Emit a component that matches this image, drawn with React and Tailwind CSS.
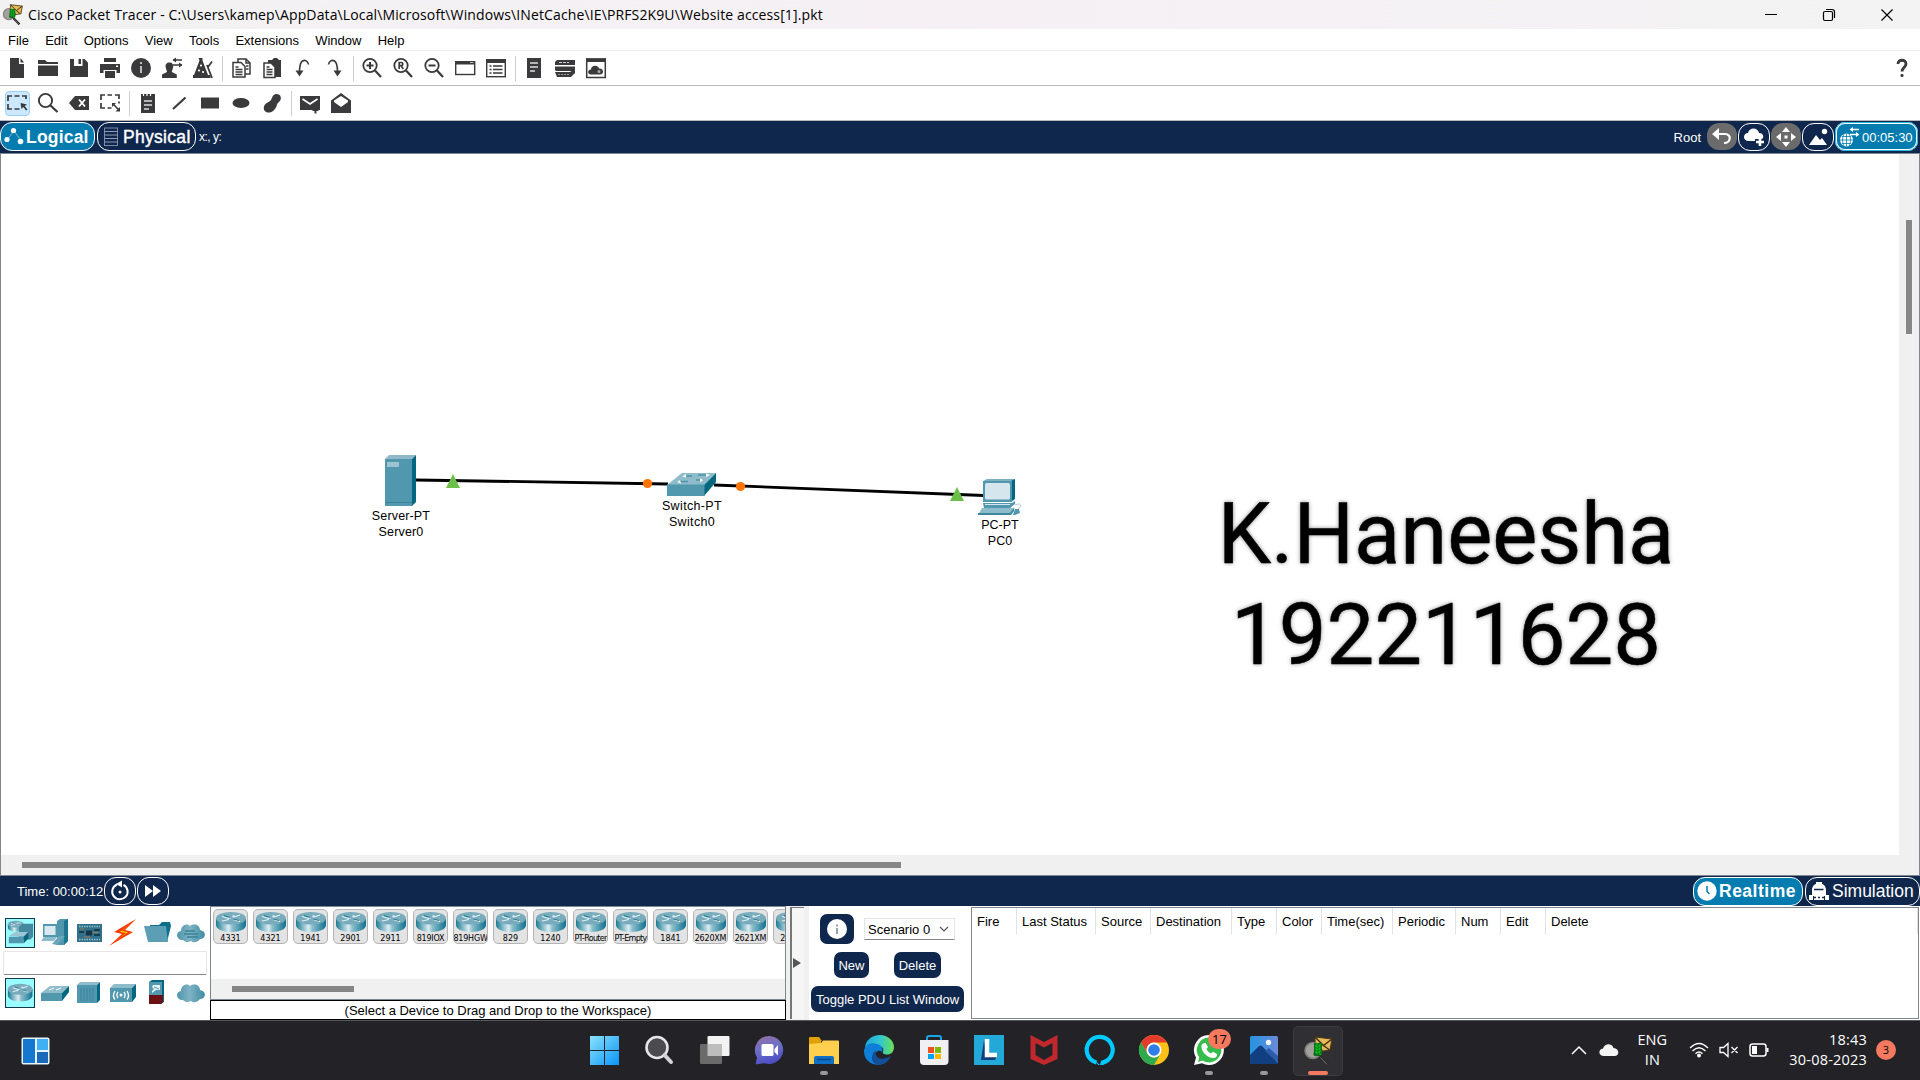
import React from "react";

const INK = "#3a3a3c";

function Svg({ w = 24, h = 24, vb, children, className = "" }) {
  return (
    <svg width={w} height={h} viewBox={vb || `0 0 ${w} ${h}`} fill="none" className={`shrink-0 ${className}`}>
      {children}
    </svg>
  );
}

function AppLogo({ size = 20 }) {
  return (
    <Svg w={size} h={size} vb="0 0 28 30">
      <path d="M15 20l9 9" stroke="#2b2b2b" strokeWidth="3.400" />
      <path d="M16.500 21.500l6.500 7" stroke="#777" strokeWidth="1" />
      <path d="M11 1l17 2-2 11-10 1.500-5-6z" fill="#e6b95a" stroke="#4a3a16" strokeWidth="1.200" />
      <path d="M11 1l8.500 8.500L28 3M19.500 9.500l6 4.500" stroke="#3d2f10" strokeWidth="1.400" />
      <circle cx="9" cy="14.500" r="8" fill="#a3a19e" stroke="#807d79" strokeWidth="1.600" />
      <path d="M11 7c5 1 7.500 5 7.500 8l-3 5-6-1z" fill="#063f0a" />
      <path d="M10 7h8v12l-8 1z" fill="#087013" />
      <path d="M11 10h6M11 13h6M11 16h6M13 7v12M16 8v11" stroke="#10d52c" strokeWidth="1" strokeDasharray="2 1" />
    </Svg>
  );
}

const G = {
  file: (
    <>
      <path d="M5 2h9v6h5v14H5z" fill={INK} />
      <path d="M15.5 2l3.500 4.500h-3.500z" fill={INK} />
    </>
  ),
  folder: (
    <>
      <path d="M2 4h7l2 2h11v2H2z" fill={INK} />
      <path d="M2 9.500h20V20H2z" fill={INK} />
    </>
  ),
  save: (
    <>
      <path d="M3 3h14.500L21 6.500V21H3z" fill={INK} />
      <path d="M7 2.500h8.500V10H7z" fill="#fff" />
      <path d="M11.500 3h2.500v5h-2.500z" fill={INK} />
    </>
  ),
  print: (
    <>
      <path d="M6 2h12v4H6zM2 8h20v9h-3.500v-3h-13v3H2zM7 15h10v7H7z" fill={INK} />
      <rect x="18" y="9.500" width="2" height="1.500" fill="#fff" />
    </>
  ),
  info: (
    <>
      <circle cx="12" cy="12" r="10" fill={INK} />
      <path d="M12 6v2M12 10v7" stroke="#ccc" strokeWidth="1.800" />
    </>
  ),
  user: (
    <>
      <path d="M9.500 6.500c3 0 4.200 2 3.600 5-.3 2-1.300 3-1.300 4.500l5 2.500V22H2v-3.500L7 16c0-1.500-1-2.500-1.300-4.500-.6-3 .8-5 3.800-5z" fill={INK} />
      <path d="M13 4h9M13 9h9" stroke={INK} strokeWidth="1.500" />
      <path d="M16 1.500v5L12.500 4zM19 6.500v5L22.500 9z" fill={INK} />
    </>
  ),
  flask: (
    <>
      <path d="M7.500 2h4v2.500L17 19H3L8.500 4.500zM2 19h17.500v3H2z" fill={INK} />
      <path d="M16 9l5 13M21 5.500l-4 5.500" stroke={INK} strokeWidth="1.800" />
      <circle cx="10" cy="9.500" r="1.100" fill="#fff" />
      <circle cx="8" cy="14.500" r="1.100" fill="#fff" />
      <circle cx="12" cy="16" r="1.100" fill="#fff" />
    </>
  ),
  copy: (
    <>
      <path d="M9 6V3h8l4 4v11h-5" stroke={INK} strokeWidth="1.500" />
      <path d="M17 3v4h4" stroke={INK} strokeWidth="1.500" />
      <path d="M4 6.500h8l4 4V21H4z" stroke={INK} strokeWidth="1.500" fill="#fff" />
      <path d="M6.500 11h3M6.500 13.500h7M6.500 16h7M6.500 18.500h7M17 10h2.500M17 13h2.500" stroke={INK} strokeWidth="1.300" />
    </>
  ),
  paste: (
    <>
      <path d="M8 4h4l2-2h3l2 2h2v17H8z" fill={INK} />
      <path d="M4 7h7l4 4v10.500H4z" stroke={INK} strokeWidth="1.500" fill="#fff" />
      <path d="M6.500 11h3M6.500 13.500h6M6.500 16h6M6.500 18.500h6" stroke={INK} strokeWidth="1.300" />
    </>
  ),
  undo: (
    <>
      <path d="M17.500 8.500C17 5 14 3.500 11.500 5 9 6.600 8.500 10 8.500 16" stroke={INK} strokeWidth="1.600" />
      <path d="M4.500 14.500h8l-4 6z" fill={INK} />
    </>
  ),
  redo: (
    <>
      <path d="M6.500 8.500C7 5 10 3.500 12.500 5c2.500 1.600 3 5 3 11" stroke={INK} strokeWidth="1.600" />
      <path d="M11.500 14.500h8l-4 6z" fill={INK} />
    </>
  ),
  zoomIn: (
    <>
      <circle cx="10" cy="9.500" r="6.700" stroke={INK} strokeWidth="1.800" />
      <path d="M15 14.500l6 6.500" stroke={INK} strokeWidth="2.200" />
      <path d="M10 6v7M6.500 9.500h7" stroke={INK} strokeWidth="2" />
    </>
  ),
  zoomReset: (
    <>
      <circle cx="10" cy="9.500" r="6.700" stroke={INK} strokeWidth="1.800" />
      <path d="M15 14.500l6 6.500" stroke={INK} strokeWidth="2.200" />
      <path d="M8.200 13V6.500h2c2.200 0 2.200 3.200 0 3.200h-2M10.200 9.700l2 3.300" stroke={INK} strokeWidth="1.700" />
    </>
  ),
  zoomOut: (
    <>
      <circle cx="10" cy="9.500" r="6.700" stroke={INK} strokeWidth="1.800" />
      <path d="M15 14.500l6 6.500" stroke={INK} strokeWidth="2.200" />
      <path d="M6.500 9.500h7" stroke={INK} strokeWidth="2" />
    </>
  ),
  rect: (
    <>
      <rect x="2.700" y="5.700" width="19" height="12.800" stroke={INK} strokeWidth="1.400" />
      <path d="M2 5h20v3.500H2z" fill={INK} />
      <path d="M17 6.500h3.500" stroke="#bbb" />
    </>
  ),
  list: (
    <>
      <rect x="2.700" y="3.700" width="18.600" height="17" stroke={INK} strokeWidth="1.400" />
      <path d="M2 3h20v4H2z" fill={INK} />
      <path d="M5.500 10h2M9 10h9.500M5.500 13.500h2M9 13.500h9.500M5.500 17h2M9 17h9.500" stroke={INK} strokeWidth="1.600" />
    </>
  ),
  doc: (
    <>
      <path d="M5 2h14v20H5z" fill={INK} />
      <path d="M8 7h8M8 11h8M8 15h5" stroke="#ddd" strokeWidth="1.500" />
    </>
  ),
  dev: (
    <>
      <path d="M4 4h18v5H2V6zM2 10.500h20v3L20 15H3l-1-1zM2 16h15l5-3.500V17l-4 4H4z" fill={INK} />
      <path d="M6 6.500h10" stroke="#ccc" strokeDasharray="3 1" />
      <path d="M5 18.500h12" stroke="#999" strokeDasharray="2 1" />
    </>
  ),
  cloud: (
    <>
      <rect x="2.700" y="3" width="18.600" height="18.500" stroke={INK} strokeWidth="1.500" />
      <path d="M2 2.500h20V6H2z" fill={INK} />
      <path d="M7 18.500c-4 0-3.500-5 0-5 0-4.500 7-5 8-1 5-.5 5.500 6 1 6z" fill={INK} />
      <circle cx="15" cy="15.500" r="1.500" fill="#aaa" />
    </>
  ),
  select: (
    <>
      <path d="M3 10V5h4M9.500 5h5M17 5h4v3M3 13v5h4M9.500 18h5" stroke={INK} strokeWidth="1.700" />
      <path d="M15.500 12l6.500 1.500-2.300 1.400 2.800 3.600-1.500 1-2.600-3.600-1.900 2z" fill={INK} />
    </>
  ),
  search: (
    <>
      <circle cx="9.500" cy="9.500" r="6.600" stroke={INK} strokeWidth="1.900" />
      <path d="M14.500 14.500l7 6.500" stroke={INK} strokeWidth="2.300" />
    </>
  ),
  erase: (
    <>
      <path d="M2 12l6-7h14v14H8z" fill={INK} />
      <path d="M12 8.500l6 7M18 8.500l-6 7" stroke="#fff" strokeWidth="1.900" />
    </>
  ),
  resize: (
    <>
      <path d="M3 9V4h4M9.500 4h4.500M17 4h4v4M21 10.500v2M3 12v5h4M9.500 17h4" stroke={INK} strokeWidth="1.700" />
      <path d="M15 13l6 6" stroke={INK} strokeWidth="1.600" />
      <path d="M14 12h4l-4 4zM22 16v4.500h-4.500z" fill={INK} />
    </>
  ),
  note: (
    <>
      <path d="M5 3h14v19H5z" fill={INK} />
      <path d="M7.500 2v3M11 2v3M14.500 2v3" stroke="#fff" strokeWidth="1.200" />
      <path d="M8 10h8M8 14h8M8 18h5" stroke="#ddd" strokeWidth="1.600" />
    </>
  ),
  line: <path d="M6 18L18.500 6.500" stroke={INK} strokeWidth="2.200" />,
  box: <rect x="3" y="6.500" width="18" height="11" fill={INK} />,
  oval: <ellipse cx="12" cy="12" rx="8.500" ry="5" fill={INK} />,
  blob: <path d="M15 3.200c4-1.200 7 2 5.500 5.800-.8 2.200-3 2.500-3.500 4.500C16 18.500 12 22 8 21.500c-4-.5-5.500-4.500-3-8 1.500-2.300 4.500-2.300 6-4.500 1-1.600 1.500-5 4-5.800z" fill={INK} />,
  mail: (
    <>
      <path d="M2 5h20v14H2z" fill={INK} />
      <path d="M4.500 8l7.500 5 7.500-5" stroke="#fff" strokeWidth="1.700" />
      <path d="M14.500 18h6v2h-2v2.500h-2V20h-2z" fill={INK} />
    </>
  ),
  openMail: (
    <>
      <path d="M2 9.500L12 2l10 7.500V22H2z" fill={INK} />
      <path d="M5 9.500L12 5l7 4.500v1.500L12 16l-7-5z" fill="#fff" />
    </>
  ),
};

function ToolCell({ name, active }) {
  return (
    <div className="flex w-[31px] shrink-0 justify-center">
      <div
        className={
          active
            ? "flex h-[25px] w-[25px] items-center justify-center rounded-sm border border-[#9dd0f5] bg-[#cce8ff]"
            : "flex h-[25px] w-[25px] items-center justify-center"
        }
      >
        <Svg w={24} h={24}>{G[name]}</Svg>
      </div>
    </div>
  );
}

function Toolbar({ groups, active, children }) {
  return (
    <div className="flex h-[35px] items-center border-b border-[#b9b9b9] bg-white pl-[1.5px]">
      {groups.map((g, i) => (
        <React.Fragment key={i}>
          {i > 0 && (
            <div className="flex w-[7px] shrink-0 justify-center">
              <div className="h-[25px] w-px bg-[#cfcfcf]" />
            </div>
          )}
          {g.map((n) => (
            <ToolCell key={n} name={n} active={n === active} />
          ))}
        </React.Fragment>
      ))}
      {children}
    </div>
  );
}

function TitleBar() {
  return (
    <div className="flex h-[29px] items-center bg-gradient-to-r from-[#f2f2f2] via-[#f6f0f5] to-[#f3f3f3] pl-[2px] font-['Open_Sans',sans-serif] text-black">
      <AppLogo size={21} />
      <span className="ml-[5px] whitespace-nowrap text-[14px] leading-none tracking-[0.125px]">
        Cisco Packet Tracer - C:\Users\kamep\AppData\Local\Microsoft\Windows\INetCache\IE\PRFS2K9U\Website access[1].pkt
      </span>
      <div className="ml-auto flex items-center">
        <div className="flex w-[58px] justify-center">
          <Svg w={14} h={14}><path d="M1 6.500h12" stroke="#000" /></Svg>
        </div>
        <div className="flex w-[58px] justify-center">
          <Svg w={14} h={14}>
            <rect x="1.500" y="3.500" width="9" height="9" rx="1.500" stroke="#000" strokeWidth="1.200" />
            <path d="M4 1.500h6a2.500 2.500 0 0 1 2.500 2.500v6" stroke="#000" strokeWidth="1.200" />
          </Svg>
        </div>
        <div className="mr-[4px] flex w-[58px] justify-center">
          <Svg w={14} h={14}><path d="M1.500 1.500l11 11M12.500 1.500l-11 11" stroke="#000" strokeWidth="1.200" /></Svg>
        </div>
      </div>
    </div>
  );
}

function NavBar() {
  return (
    <div className="flex h-8 items-center bg-[#0f274c] pb-px text-white">
      <div className="flex h-[29px] w-[95px] items-center rounded-[12px] border border-white bg-[#047cb0] pl-[3px]">
        <Svg w={20} h={22}>
          <path d="M3 14l7-9 8 11" stroke="#5fabc9" strokeWidth="1.200" />
          <circle cx="3" cy="13.500" r="2.600" fill="#fff" />
          <circle cx="9.500" cy="4.500" r="2.600" fill="#fff" />
          <circle cx="16.500" cy="15.500" r="2.800" fill="#fff" />
        </Svg>
        <span className="ml-[2px] pt-[2px] text-[17.500px] leading-none font-bold tracking-[0.2px]">Logical</span>
      </div>
      <div className="ml-[2px] flex h-[29px] w-[99px] items-center rounded-[12px] border border-white pl-[5px]">
        <Svg w={16} h={20}>
          <rect x="1.500" y="1" width="13" height="17.500" stroke="#7c8aa5" />
          <path d="M1 4.500h14M1 8h14M1 11.500h14M1 15h14" stroke="#8f9bb2" />
        </Svg>
        <span className="ml-[4px] pt-[2px] text-[17.500px] leading-none tracking-[0.3px] [-webkit-text-stroke:0.4px_white]">Physical</span>
      </div>
      <span className="ml-[3px] pt-px text-[12px] leading-none tracking-[-0.5px]">x:, y:</span>
      <div className="ml-auto flex items-center gap-px pr-[2px]">
        <span className="mr-[5px] pt-px text-[13px] leading-none">Root</span>
        <div className="flex h-[27px] w-[30px] items-center justify-center rounded-[12px] bg-[#6b6b6b]">
          <Svg w={22} h={20}>
            <path d="M5 7h9c7 0 6 9-1 9" stroke="#fff" strokeWidth="2.200" />
            <path d="M1 7l7-6v12z" fill="#fff" />
          </Svg>
        </div>
        <div className="flex h-[28px] w-[32px] items-center justify-center rounded-[12px] border border-white">
          <Svg w={24} h={22}>
            <path d="M7 15c-7 0-6-8-1-8 1-6 10-6 11 0 5 0 5 5 3 6h-7v2z" fill="#fff" />
            <path d="M18 12v8M14 16h8" stroke="#fff" strokeWidth="2.600" />
          </Svg>
        </div>
        <div className="flex h-[27px] w-[30px] items-center justify-center rounded-[12px] bg-[#6b6b6b]">
          <Svg w={22} h={22}>
            <path d="M11 1l4 5H7zM11 21l-4-5h8zM1 11l5-4v8zM21 11l-5 4V7z" fill="#fff" />
            <rect x="9.500" y="9.500" width="3" height="3" fill="#fff" />
          </Svg>
        </div>
        <div className="flex h-[28px] w-[32px] items-center justify-center rounded-[12px] border border-white">
          <Svg w={22} h={20}>
            <path d="M2 18l7-10 4 5 2-2 5 7z" fill="#fff" />
            <circle cx="17.500" cy="4.500" r="2.700" fill="#fff" />
          </Svg>
        </div>
        <div className="flex h-[29px] w-[83px] items-center rounded-[10px] border-2 border-white bg-[#047cb0] outline outline-1 -outline-offset-1 outline-[#25b9e6] pl-[2px]">
          <Svg w={21} h={22}>
            <circle cx="7.500" cy="14" r="6.500" fill="#fff" />
            <path d="M1 14h13M7.500 7.500v13M3 10.500h9M3 17.500h9M5 8c-2 4-2 8 0 12M10 8c2 4 2 8 0 12" stroke="#047cb0" strokeWidth=".8" />
            <path d="M12 3.500h8M11 8.500h8" stroke="#fff" strokeWidth="1.500" />
            <path d="M14 1v5l-3.500-2.500zM17 6v5l3.500-2.500z" fill="#fff" />
          </Svg>
          <span className="ml-[2px] pt-px text-[13px] leading-none">00:05:30</span>
        </div>
      </div>
    </div>
  );
}

function Canvas() {
  return (
    <div className="flex h-[723px] flex-col border border-[#80868f] bg-white">
      <div className="flex min-h-0 flex-1">
        <div className="relative flex-1 bg-white text-center text-[12.500px] leading-[16px] text-black">
          <svg width="1898" height="700" viewBox="1 154 1898 700" className="absolute left-0 top-0" fill="none">
            <path d="M416 480L668 484M714 485L984 495.500" stroke="#000" strokeWidth="2.800" />
            <path d="M453 474l7 14h-14zM957 487l7 14h-14z" fill="#6cc04a" />
            <circle cx="647.500" cy="483.500" r="4.600" fill="#ff7300" />
            <circle cx="740.500" cy="486.500" r="4.600" fill="#ff7300" />
            <path d="M385 459l4-4h27l-4 4z" fill="#8fb8c8" />
            <path d="M412 459l4-4v47l-4 4z" fill="#04677f" />
            <rect x="385" y="459" width="27" height="47" fill="#5198af" />
            <rect x="387" y="462" width="12" height="5" fill="#9cc3d1" />
            <path d="M385 502.500h27" stroke="#3b8199" />
            <path d="M667 485l15-12h34l-12 12z" fill="#8fbccb" />
            <path d="M704 485l12-12v9l-12 14z" fill="#04677f" />
            <path d="M667 484.500h37.500V496H667z" fill="#5198af" />
            <path d="M683 476h9M698 475h9M679 481.500h9M696 480h8" stroke="#4e92a8" strokeWidth="1.500" />
            <path d="M686 474l-4 2.500 4 1zM706 473.500l4 1.500-4 2zM680 480l-3 2 4 1.500zM700 478.500l4 1.500-4 2z" fill="#fff" />
            <path d="M983 481l4-2h28l-3 3z" fill="#7fb0c1" />
            <path d="M1011 481l4-2v20l-4 3z" fill="#04677f" />
            <rect x="983" y="481" width="29" height="21" fill="#5198af" />
            <rect x="985" y="483" width="25" height="16.500" rx="1.500" fill="#d5e6ec" />
            <path d="M983 503h29l3-2v3l-5 4h-26z" fill="#5198af" />
            <path d="M985 504.500h25" stroke="#d5e6ec" />
            <path d="M982 508h33l-5 7h-32z" fill="#8fbccb" />
            <path d="M978 513h32l4-5v3l-3 4h-33z" fill="#3d879f" />
            <path d="M1015 505c7-3 7 2 3 4" stroke="#b9cdd5" />
            <path d="M1015 509h4l1 4-5 2h-2z" fill="#5198af" />
          </svg>
          <div className="absolute left-[350px] top-[354px] w-[100px] tracking-[0.15px]">Server-PT<br />Server0</div>
          <div className="absolute left-[641px] top-[344px] w-[100px] tracking-[0.35px]">Switch-PT<br />Switch0</div>
          <div className="absolute left-[949px] top-[363px] w-[100px]">PC-PT<br />PC0</div>
          <div className="absolute left-[1195px] top-[330px] w-[500px] font-['Roboto',sans-serif] text-[85px] leading-[101px] [-webkit-text-stroke:0.5px_black] [text-shadow:0_0_4px_rgba(0,0,0,0.5)]">
            K.Haneesha<br />192211628
          </div>
        </div>
        <div className="w-[20px] bg-[#f0f0f0] pt-[66px]">
          <div className="mx-auto h-[114px] w-[6px] bg-[#868686]" />
        </div>
      </div>
      <div className="h-[20px] bg-[#f0f0f0] pl-[21px] pt-[7px]">
        <div className="h-[6px] w-[879px] bg-[#868686]" />
      </div>
    </div>
  );
}

function TimeBar() {
  return (
    <div className="flex h-[30px] items-center bg-[#0f274c] pl-[17px] text-white">
      <span className="w-[87px] whitespace-nowrap text-[13px] leading-none">Time: 00:00:12</span>
      <div className="flex h-[28px] w-[32px] items-center justify-center rounded-[12px] border border-white">
        <Svg w={22} h={22}>
          <path d="M8 4.500A7.700 7.700 0 1 0 14.500 4.800" stroke="#fff" strokeWidth="2" />
          <path d="M7 4l6-3.500v7z" fill="#fff" />
          <circle cx="11" cy="12" r="1.500" fill="#fff" />
        </Svg>
      </div>
      <div className="ml-px flex h-[28px] w-[32px] items-center justify-center rounded-[12px] border border-white">
        <Svg w={18} h={14}><path d="M1 1l8 6-8 6zM9 1l8 6-8 6z" fill="#fff" /></Svg>
      </div>
      <div className="ml-auto flex items-center gap-[2px] text-[17.500px] leading-none">
        <div className="flex h-[29px] w-[110px] items-center rounded-[12px] border border-white bg-[#047cb0] pl-[3px]">
          <Svg w={20} h={20}>
            <circle cx="10" cy="10" r="9.700" fill="#fff" />
            <path d="M10 5v5.500l2.500 2.500" stroke="#047cb0" strokeWidth="1.500" />
          </Svg>
          <span className="ml-[2px] pt-px font-bold tracking-[0.5px]">Realtime</span>
        </div>
        <div className="flex h-[29px] w-[115px] items-center rounded-[12px] border border-white pl-[3px]">
          <Svg w={20} h={20}>
            <path d="M3 15V9c0-4 3-6 4-6V1h6v2c1 0 4 2 4 6v6zM0 14h4v5H0zM16 14h4v5h-4zM5 15h10v4H5z" fill="#fff" />
            <path d="M5 8.500h9.500M5 16.500h2M9 16.500h2M13 16.500h2" stroke="#0f274c" strokeWidth="1.700" />
          </Svg>
          <span className="ml-[3px] pt-px">Simulation</span>
        </div>
      </div>
    </div>
  );
}

function Gradients() {
  return (
    <svg width="0" height="0" className="absolute">
      <defs>
        <linearGradient id="cyl">
          <stop offset="0" stopColor="#1c7a92" />
          <stop offset=".42" stopColor="#d9edf2" />
          <stop offset=".55" stopColor="#8abccb" />
          <stop offset="1" stopColor="#0f7390" />
        </linearGradient>
        <linearGradient id="soft">
          <stop offset="0" stopColor="#4f95ac" />
          <stop offset=".45" stopColor="#7fb3c4" />
          <stop offset="1" stopColor="#3f8ba4" />
        </linearGradient>
      </defs>
    </svg>
  );
}

function RouterShape() {
  return (
    <>
      <path d="M0 6v7c0 4 6 7 15 7s15-3 15-7V6z" fill="url(#cyl)" />
      <ellipse cx="15" cy="6.300" rx="15" ry="6.300" fill="#78acbd" />
      <path d="M6 4.500l7 2M18 5l6-2M6 9l7-1.500M17 7.500l7 2" stroke="#e4f0f4" strokeWidth="1.200" />
      <path d="M13 4.500l2 2.200-4 .3zM17 2.500l-1 3 4-.5z" fill="#d6e8ee" />
      <path d="M8 3.500l6 2M17 7l6 1.500" stroke="#1c6f88" strokeWidth=".9" />
    </>
  );
}

const CATS = {
  network: (
    <>
      <g transform="translate(2 2) scale(.57)"><RouterShape /></g>
      <path d="M14 8l4-3h11v14l-3 3H14z" fill="#4489a0" />
      <path d="M3 18l7-4h14l-5 5z" fill="#9cc6d3" />
      <path d="M3 19h16v7H3z" fill="#5198af" />
      <path d="M19 19l5-5v7l-5 5z" fill="#04677f" />
    </>
  ),
  end: (
    <>
      <path d="M17 3l3-2h8v22l-4 4h-7z" fill="#5198af" />
      <path d="M24 3l4-2v22l-4 4z" fill="#1d7690" />
      <path d="M3 6h15v13H3z" fill="#5198af" />
      <path d="M4.500 8h11v9h-11z" fill="#dceaef" />
      <path d="M4 19h13l-3 4H1z" fill="#8fbccb" />
      <path d="M12 26l7-8h6l-8 9z" fill="#6aa7ba" />
    </>
  ),
  board: (
    <>
      <rect x="3" y="6" width="25" height="18" fill="#33718a" />
      <path d="M5 8.500h21M5 21.500h21" stroke="#8fc0cd" strokeWidth="1.500" strokeDasharray="1.500 1" />
      <rect x="12" y="12.500" width="6" height="5" fill="#173444" />
      <path d="M5 14h5M20 12h6M20 17h6" stroke="#173f52" strokeWidth="2" />
      <path d="M6 11h4M19 14.500h5M10 19h6" stroke="#a47b4d" strokeWidth="1" />
    </>
  ),
  bolt: (
    <>
      <path d="M28 1L6 14l8 2L1 28l24-14-8-2z" fill="#fb3b00" />
      <path d="M21 7l-9 7 6 1-9 7 11-8-6-1z" fill="#ffd000" />
    </>
  ),
  folder: (
    <>
      <path d="M8 7h9l3-3h8l1 4-4 16H10z" fill="#0f6f8a" />
      <path d="M2 8h22l2 16H6z" fill="#5c9fb4" />
    </>
  ),
  cloudLines: (
    <>
      <path d="M7 22c-7 0-8-8-2-9 0-6 6-8 9-5 4-3 10-1 10 4 7 1 6 9 0 9-3 4-7 4-9 2-3 2-6 1-8-1z" fill="url(#soft)" />
      <path d="M9 13h10M8 16h14M11 19h11" stroke="#3b8299" strokeWidth="1.300" />
    </>
  ),
  router: <g transform="translate(2 5) scale(.88 .95)"><RouterShape /></g>,
  sw: (
    <>
      <path d="M1 15l9-7h19l-7 7z" fill="#8fbccb" />
      <path d="M1 15h21v8H1z" fill="#5198af" />
      <path d="M22 15l7-7v6l-7 9z" fill="#04677f" />
      <path d="M9 12l5-2M16 12l5-2" stroke="#fff" />
    </>
  ),
  hub: (
    <>
      <path d="M3 7l3-3h20l-3 3z" fill="#8fbccb" />
      <path d="M23 7l3-3v18l-3 3z" fill="#04677f" />
      <rect x="3" y="7" width="20" height="18" fill="#5198af" />
      <path d="M7 10v13M10 10v13M13 10v13M16 10v13M19 10v13" stroke="#3a839b" />
    </>
  ),
  wifi: (
    <>
      <path d="M2 10l4-4h22l-4 4z" fill="#8fbccb" />
      <path d="M24 10l4-4v13l-4 5z" fill="#04677f" />
      <rect x="2" y="10" width="22" height="14" fill="#5198af" />
      <circle cx="13" cy="17" r="1.500" fill="#fff" />
      <path d="M10 14c-1.500 2-1.500 4 0 6M16 14c1.500 2 1.500 4 0 6M7 13c-2 3-2 6 0 8.500M19 13c2 3 2 6 0 8.500" stroke="#fff" strokeWidth="1.300" />
    </>
  ),
  firewall: (
    <>
      <path d="M7 4l3-2h12v22l-3 2H7z" fill="#04677f" />
      <rect x="7" y="4" width="13" height="13" fill="#5198af" />
      <path d="M7 17h14v7l-2 2H7z" fill="#6b1015" />
      <path d="M11 7h7v5h-4l-4 3v-2l2-2-2-2z" fill="#e6f0f3" />
      <path d="M12 9l5 2" stroke="#5198af" />
    </>
  ),
  cloud: <path d="M7 22c-7 0-8-8-2-9 0-6 6-8 9-5 4-3 10-1 10 4 7 1 6 9 0 9-3 4-7 4-9 2-3 2-6 1-8-1z" fill="url(#soft)" />,
};

function CatRow({ names }) {
  return (
    <div className="flex gap-1 pl-[5px]">
      {names.map((n, i) => (
        <div
          key={n}
          className={
            i === 0
              ? "mr-px flex h-[30px] w-[30px] items-center justify-center border border-[#123b49] bg-[#99fdff]"
              : "flex h-[30px] w-[30px] items-center justify-center"
          }
        >
          <Svg w={i === 0 ? 28 : 30} h={i === 0 ? 28 : 30} vb="0 0 30 30">{CATS[n]}</Svg>
        </div>
      ))}
    </div>
  );
}

const DEVICES = ["4331", "4321", "1941", "2901", "2911", "819IOX", "819HGW", "829", "1240", "PT-Router", "PT-Empty", "1841", "2620XM", "2621XM", "2811"];

const COLS = [
  ["Fire", "w-[45px]"],
  ["Last Status", "w-[79px]"],
  ["Source", "w-[55px]"],
  ["Destination", "w-[81px]"],
  ["Type", "w-[45px]"],
  ["Color", "w-[45px]"],
  ["Time(sec)", "w-[71px]"],
  ["Periodic", "w-[63px]"],
  ["Num", "w-[45px]"],
  ["Edit", "w-[45px]"],
];

function BottomPanel() {
  return (
    <div className="flex h-[114px] bg-white text-[13px] leading-none text-black">
      <Gradients />
      <div className="w-[210px] shrink-0 pt-[12px]">
        <CatRow names={["network", "end", "board", "bolt", "folder", "cloudLines"]} />
        <div className="ml-[3px] mt-[3px] h-[24px] w-[204px] rounded-[2px] border border-[#e6e6e6] border-b-[#868686]" />
        <div className="mt-[3px]">
          <CatRow names={["router", "sw", "hub", "wifi", "firewall", "cloud"]} />
        </div>
      </div>
      <div className="flex w-[576px] shrink-0 flex-col">
        <div className="flex h-[94px] flex-col border border-[#80868f]">
          <div className="flex flex-1 gap-[5px] overflow-hidden pl-[2px] pt-[2px]">
            {DEVICES.map((d) => (
              <div key={d} className="flex h-[35px] w-[35px] shrink-0 flex-col items-center overflow-hidden rounded-[5px] border border-[#b5b5b5] bg-[#e3e3e3] pt-[2px]">
                <Svg w={30} h={21}><RouterShape /></Svg>
                <span className={`mt-[1px] whitespace-nowrap font-['DejaVu_Sans',sans-serif] text-[8px] leading-[9px] ${d.length > 7 ? "tracking-[-0.7px]" : d.length > 5 ? "tracking-[-0.2px]" : ""}`}>{d}</span>
              </div>
            ))}
          </div>
          <div className="h-[20px] bg-[#f0f0f0] pl-[21px] pt-[7px]">
            <div className="h-[6px] w-[122px] bg-[#868686]" />
          </div>
        </div>
        <div className="flex h-[20px] items-center justify-center border border-black">(Select a Device to Drag and Drop to the Workspace)</div>
      </div>
      <div className="flex w-[23px] shrink-0 bg-[#f0f0f0] pl-[4px]">
        <div className="mt-px flex h-[112px] w-[14px] items-center border-l-2 border-t border-[#777] bg-[#f6f6f6] pb-[2px]">
          <Svg w={10} h={12}><path d="M1 1l8 5-8 5z" fill="#555" /></Svg>
        </div>
      </div>
      <div className="w-[162px] shrink-0 pl-[2px] pt-[8px]">
        <div className="flex items-center pl-[9px]">
          <div className="flex h-[30px] w-[34px] items-center justify-center rounded-[7px] bg-[#0f274c]">
            <Svg w={20} h={20}>
              <circle cx="10" cy="10" r="10" fill="#fff" />
              <path d="M10 5.500v2M10 9v6" stroke="#7d8ba4" strokeWidth="1.600" />
            </Svg>
          </div>
          <div className="ml-[10px] flex h-[22px] w-[91px] items-center justify-between border border-[#e6e6e6] border-b-[#868686] pl-[3px] pr-[5px]">
            <span>Scenario 0</span>
            <Svg w={10} h={8}><path d="M1 2l4 4 4-4" stroke="#555" strokeWidth="1.200" /></Svg>
          </div>
        </div>
        <div className="mt-[8px] flex pl-[23px] text-white">
          <div className="flex h-[26px] w-[35px] items-center justify-center rounded-[7px] bg-[#0f274c]">New</div>
          <div className="ml-[25px] flex h-[26px] w-[47px] items-center justify-center rounded-[7px] bg-[#0f274c]">Delete</div>
        </div>
        <div className="mt-[8px] flex h-[26px] w-[153px] items-center justify-center whitespace-nowrap rounded-[7px] bg-[#0f274c] text-white">Toggle PDU List Window</div>
      </div>
      <div className="mb-px mr-px mt-px flex flex-1 items-start border border-[#80868f]">
        {COLS.map(([t, w]) => (
          <div key={t} className={`flex h-[26px] shrink-0 items-center border-r border-[#e2e2e2] pl-[5px] ${w}`}>{t}</div>
        ))}
        <div className="flex h-[26px] flex-1 items-center border-r border-[#e2e2e2] pl-[5px]">Delete</div>
      </div>
    </div>
  );
}

const APPS = {
  start: (
    <>
      <defs><linearGradient id="wn" x2="1" y2="1"><stop stopColor="#8be2ff" /><stop offset="1" stopColor="#0a94f5" /></linearGradient></defs>
      <path d="M1 1h14v14H1zM16 1h14v14H16zM1 16h14v14H1zM16 16h14v14H16z" fill="url(#wn)" />
    </>
  ),
  find: (
    <>
      <circle cx="13" cy="12.500" r="10.500" fill="#4b4b50" stroke="#e6e6e8" strokeWidth="2.600" />
      <path d="M20.500 20l6.500 7" stroke="#d5d5d8" strokeWidth="4" strokeLinecap="round" />
    </>
  ),
  tasks: (
    <>
      <rect x="8.500" y="1" width="22" height="20" rx="1" fill="#f2f2f2" />
      <rect x="1" y="9" width="22" height="20" rx="1" fill="#6b6b6b" />
      <rect x="8.500" y="9" width="14.500" height="12" fill="#bdbdbd" />
    </>
  ),
  chat: (
    <>
      <defs><linearGradient id="ct" x2=".3" y2="1"><stop stopColor="#9a6f9f" /><stop offset=".5" stopColor="#6d6fc8" /><stop offset="1" stopColor="#4e50c4" /></linearGradient></defs>
      <path d="M15.500 1a14 14 0 1 1-5 27.200L1.500 29.500l1.500-7A14.200 14.200 0 0 1 15.500 1z" fill="url(#ct)" />
      <rect x="7.500" y="9" width="12" height="12" rx="1.500" fill="#fff" />
      <path d="M20.500 14l3.500-4v10.500L20.500 17z" fill="#fff" />
    </>
  ),
  files: (
    <>
      <path d="M0 3q0-1 1-1h9l3 4h-1v4H0z" fill="#e1a100" />
      <path d="M0 9l12-1 2-2.500h15q1 0 1 1V29H0z" fill="#ffd04d" />
      <path d="M5 29v-6q0-2 2-2h16q2 0 2 2v6z" fill="#0f6fc4" />
      <path d="M8 24.500h14" stroke="#08498c" strokeWidth="1.500" />
    </>
  ),
  edge: (
    <>
      <defs><linearGradient id="ed"><stop stopColor="#1ca4dc" /><stop offset=".55" stopColor="#35c6d0" /><stop offset="1" stopColor="#69e251" /></linearGradient></defs>
      <path d="M1 14C1 5 8 0 16 0c8 0 14 6 14 12 0 5-3 7.500-7 7.500-3 0-5-1-4-3 1-2 0-5-4-5.500C8 10 2 12 0 18z" fill="url(#ed)" />
      <path d="M0 16C1 9 8 7 13 9c5 1 6 5 5 8-3-3-8 0-7 5 1 4 5 6 10 5-3 3-8 3.500-12 2C3 27 0 22 0 16z" fill="#0d7fd8" />
      <path d="M12 15c-2 7 4 12 15 6-2 5-7 9-12 9-7 0-10-9-3-15z" fill="#124f96" />
    </>
  ),
  store: (
    <>
      <path d="M8 6V3q0-2 2-2h10q2 0 2 2v3" stroke="#17a3e6" strokeWidth="2" />
      <path d="M1 5h28.500v21q0 4-4 4H5q-4 0-4-4z" fill="#f0f0f2" />
      <path d="M9 12h6v6H9z" fill="#f25022" /><path d="M16 12h6v6h-6z" fill="#7fba00" />
      <path d="M9 19h6v5H9z" fill="#00a4ef" /><path d="M16 19h6v5h-6z" fill="#ffb900" />
    </>
  ),
  l: (
    <>
      <rect width="30" height="30" fill="#22a9d8" />
      <path d="M10 5L7 25h14l2-4H13z" fill="#123d7d" />
      <path d="M13 4v16h10" stroke="#fff" strokeWidth="4.500" />
    </>
  ),
  shield: <path d="M1.500 0l13.500 7L28.500 0v24L15 30 1.500 24zM6.500 8v12l8.500 5 8.500-5V8L15 12.500z" fill="#c1282d" fillRule="evenodd" />,
  alexa: (
    <>
      <path d="M12.500 27.500A13 13 0 1 1 18 27.700" stroke="#00caff" strokeWidth="4.200" />
      <path d="M11 25.500l5 4.500 1-4q6-1.500 9-6l1 4-8 6h-5z" fill="#00caff" />
    </>
  ),
  chrome: (
    <>
      <circle cx="15" cy="15" r="15" fill="#fbc116" />
      <path d="M2 7.500A15 15 0 0 1 28 7.500H15A7.500 7.500 0 0 0 8.500 18.700z" fill="#e33b2e" />
      <path d="M2 7.500l6.500 11.300A7.500 7.500 0 0 0 21.500 18.700L15 30A15 15 0 0 1 2 7.500z" fill="#2da94f" />
      <circle cx="15" cy="15" r="7.500" fill="#fff" /><circle cx="15" cy="15" r="5.800" fill="#2f7de9" />
    </>
  ),
  wa: (
    <>
      <path d="M15 0a15 15 0 1 1-7 28.300L0 30l2-7.500A15 15 0 0 1 15 0z" fill="#fff" />
      <path d="M15 2.600a12.400 12.400 0 1 1-6.500 23L4 27l1.200-4.700A12.400 12.400 0 0 1 15 2.600z" fill="#35bd4c" />
      <path d="M9 8.500l2.500-.7L14 12l-1.500 2c1 2 2.500 3.500 4.500 4.500l2-1.800 4 2.300c.5 3-2 4.500-4.500 4C12 22 7 16 7.500 11c.2-1 .7-2 1.500-2.500z" fill="#fff" />
    </>
  ),
  photos: (
    <>
      <defs><linearGradient id="ph"><stop stopColor="#2494e2" /><stop offset="1" stopColor="#6a8bd8" /></linearGradient></defs>
      <rect x="1" y="1" width="28" height="28" rx="1.500" fill="url(#ph)" />
      <path d="M1 20l9-9q1.500-1 3 0l16 17v1H1z" fill="#123f82" />
      <path d="M16 16l4-3 9 8v6z" fill="#2d5cab" />
      <circle cx="19.500" cy="7.500" r="2.700" fill="#f0f6ff" />
    </>
  ),
};

const TASKS = [["start"], ["find"], ["tasks"], ["chat"], ["files", 1], ["edge"], ["store"], ["l"], ["shield"], ["alexa"], ["chrome"], ["wa", 1], ["photos", 1]];

function Taskbar() {
  return (
    <div className="flex h-[60px] items-center border-t border-[#55585c] bg-[#222227] font-['Open_Sans',sans-serif] text-white">
      <div className="w-[576px] shrink-0 pl-[21px]">
        <Svg w={29} h={28}>
          <rect x=".5" y=".5" width="28" height="27" rx="2" fill="#e8f4fc" />
          <rect x="2" y="2" width="12" height="24" fill="#1577cf" />
          <rect x="16" y="2" width="11" height="11" fill="#3fb0f3" />
          <rect x="16" y="15" width="11" height="11" fill="#1b69b8" />
        </Svg>
      </div>
      {TASKS.map(([n, on]) => (
        <div key={n} className="relative flex h-full w-[55px] shrink-0 items-center justify-center pb-px">
          <Svg w={30} h={30} className="overflow-visible">{APPS[n]}</Svg>
          {on && <div className="absolute bottom-[5px] h-1 w-2 rounded-full bg-[#98989c]" />}
          {n === "wa" && (
            <div className="absolute left-[27px] top-[8px] flex h-[20px] w-[23px] items-center justify-center rounded-full bg-[#f4795f] text-[13px] leading-none text-black">17</div>
          )}
        </div>
      ))}
      <div className="relative ml-[2px] flex h-[50px] w-[50px] items-center justify-center rounded-[5px] border border-[#3c3c41] bg-[#2f2f34]">
        <AppLogo size={30} />
        <div className="absolute bottom-0 h-1 w-[20px] rounded-full bg-[#f4795f]" />
      </div>
      <div className="ml-auto flex items-center pb-[2px] text-[14.500px] leading-[20px]">
        <Svg w={16} h={10}><path d="M1 9l7-7 7 7" stroke="#fff" strokeWidth="1.500" /></Svg>
        <Svg w={20} h={14} className="ml-[12px]"><path d="M5 13c-6 0-6-7-1-7.500C6 0 13 0 14.500 5c6 0 6.500 8 1 8z" fill="#f4f4f4" /></Svg>
        <div className="ml-[17px] w-[32px] text-center">ENG<br />IN</div>
        <Svg w={20} h={16} className="ml-[21px]">
          <path d="M1 6q9-9 18 0M3.500 9q6.500-6.500 13 0M6.500 11.700q3.500-3.400 7 0" stroke="#fff" strokeWidth="1.400" />
          <circle cx="10" cy="13.500" r="2" fill="#fff" />
        </Svg>
        <Svg w={20} h={16} className="ml-[10px]">
          <path d="M1 5.500h3.500L9 1.500v13l-4.500-4H1zM12.500 5l6 6M18.500 5l-6 6" stroke="#fff" strokeWidth="1.300" />
        </Svg>
        <Svg w={20} h={14} className="ml-[10px]">
          <rect x="1" y="1" width="16" height="12" rx="2.500" stroke="#fff" strokeWidth="1.500" />
          <rect x="3" y="3" width="5" height="8" fill="#fff" /><path d="M18.500 5v4" stroke="#fff" strokeWidth="2" />
        </Svg>
        <div className="ml-[20px] whitespace-nowrap text-right tracking-[0.2px]">18:43<br />30-08-2023</div>
        <div className="ml-[9px] mr-[24px] flex h-5 w-5 items-center justify-center rounded-full bg-[#f4795f] text-[11px] text-black">3</div>
      </div>
    </div>
  );
}

export default function App() {
  return (
    <div className="flex h-[1080px] w-[1920px] flex-col overflow-hidden bg-white font-['Liberation_Sans',Arial,sans-serif]">
      <TitleBar />
      <div className="flex h-[22px] items-center gap-[16.2px] border-b border-[#ededed] bg-white pl-2 pt-[2px] text-[13px] leading-none text-black">
        {["File", "Edit", "Options", "View", "Tools", "Extensions", "Window", "Help"].map((m) => (
          <span key={m}>{m}</span>
        ))}
      </div>
      <Toolbar
        groups={[
          ["file", "folder", "save", "print", "info", "user", "flask"],
          ["copy", "paste", "undo", "redo"],
          ["zoomIn", "zoomReset", "zoomOut", "rect", "list"],
          ["doc", "dev", "cloud"],
        ]}
      >
        <Svg w={12} h={20} className="ml-auto mr-[12px]">
          <path d="M2 6C2 1 10 1 10 6c0 3-4 3.500-4 7.500" stroke={INK} strokeWidth="2.800" />
          <rect x="4.500" y="16" width="3" height="3" rx="1.200" fill={INK} />
        </Svg>
      </Toolbar>
      <Toolbar
        active="select"
        groups={[
          ["select", "search", "erase", "resize"],
          ["note", "line", "box", "oval", "blob"],
          ["mail", "openMail"],
        ]}
      />
      <NavBar />
      <Canvas />
      <TimeBar />
      <BottomPanel />
      <Taskbar />
    </div>
  );
}
